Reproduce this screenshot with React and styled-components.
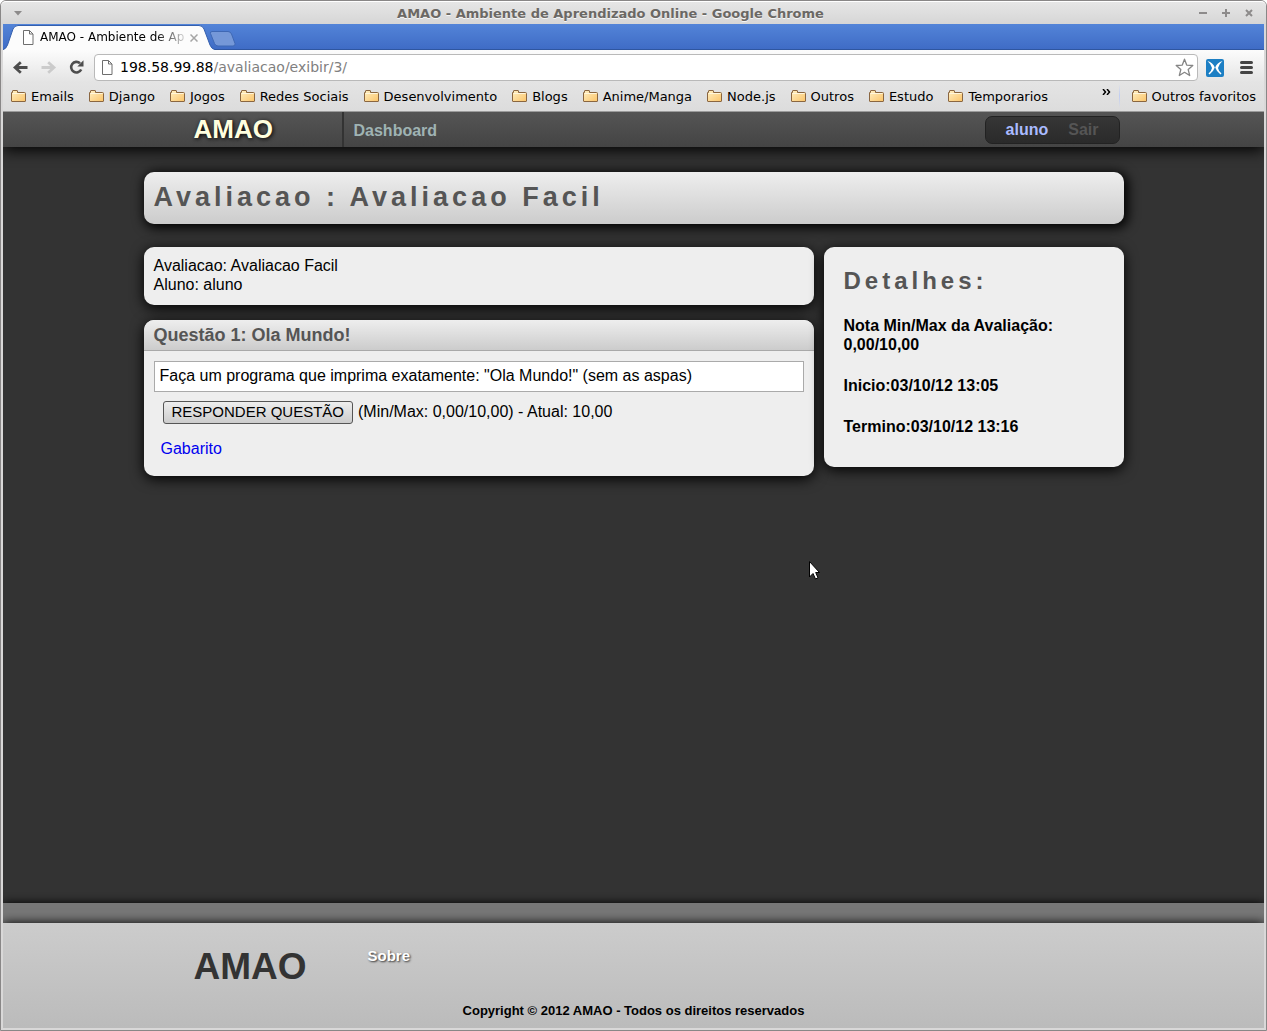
import React from "react";
import styled, { createGlobalStyle } from "styled-components";

const sans = `"Liberation Sans", Arial, sans-serif`;
const uiSans = `"DejaVu Sans", Verdana, sans-serif`;

const GlobalStyle = createGlobalStyle`
  *, *::before, *::after { box-sizing: border-box; }
  html { background: #fff; }
  body { margin: 0; font-family: ${sans}; font-size: 16px; line-height: 19px; color: #000; }
  h1, h2, h3, p { margin: 0; padding: 0; }
  svg { display: block; flex: none; }
`;

/* ---------- window ---------- */

const Window = styled.div`
  min-height: 100vh;
  display: flex;
  flex-direction: column;
  border: 1px solid #898787;
  border-radius: 6px 6px 0 0;
  background: #d9d8d8;
  padding: 0 2px 2px;
`;

const TitleBar = styled.header`
  height: 23px;
  display: flex;
  align-items: center;
  margin: 0 -2px;
  padding: 0 6px 0 4px;
  border-top: 1px solid #fff;
  border-radius: 5px 5px 0 0;
  background: linear-gradient(#e6e6e6, #d6d6d6);
  font-family: ${uiSans};
`;

const WindowTitle = styled.h1`
  flex: 1;
  text-align: center;
  font-size: 13px;
  line-height: 19px;
  color: #6b6864;
  text-shadow: 0 1px 0 #f6f6f6;
`;

const IconButton = styled.button`
  display: grid;
  place-items: center;
  width: ${(p) => p.$w}px;
  height: ${(p) => p.$h || 20}px;
  padding: 0;
  border: 0;
  background: none;
  color: ${(p) => p.$color || "#8d8b8b"};
  flex: none;
`;

const TabStrip = styled.div`
  height: 26px;
  display: flex;
  align-items: flex-end;
  border-bottom: 1px solid #2f56a0;
  background: linear-gradient(#5384d8, #3f6cc6);
`;

const Tab = styled.div`
  position: relative;
  width: 210px;
  height: 25px;
  margin-bottom: -1px;
  display: flex;
  align-items: center;
  padding: 0 12px 0 19px;
  font-family: ${uiSans};
  font-size: 12px;
`;

const TabShape = styled.svg`
  position: absolute;
  left: 0;
  top: 0;
`;

const TabLabel = styled.span`
  flex: 1;
  margin-left: 6px;
  white-space: nowrap;
  mask-image: linear-gradient(90deg, #000 115px, transparent 150px);
  position: relative;
`;

const TabIcon = styled.span`
  position: relative;
`;

const NewTab = styled.button`
  height: 25px;
  width: 27px;
  margin-left: -4px;
  padding: 4px 0 0;
  border: 0;
  background: none;
  position: relative;
`;

const BrowserBars = styled.div`
  border-bottom: 1px solid #9b9b9b;
  background: linear-gradient(#fcfcfc, #e4e4e4 32px, #dcdcdc);
  font-family: ${uiSans};
`;

const Toolbar = styled.div`
  display: flex;
  align-items: center;
  padding: 4px 7px 0 4px;
`;

const Omnibox = styled.div`
  flex: 1;
  height: 27px;
  margin: 0 8px 0 3px;
  padding: 0 3px 0 6px;
  display: flex;
  align-items: center;
  border: 1px solid #b9b9b9;
  border-radius: 4px;
  background: #fff;
  font-size: 14px;
`;

const Host = styled.label`
  margin-left: 7px;
`;

const UrlInput = styled.input`
  flex: 1;
  min-width: 0;
  padding: 0;
  border: 0;
  outline: 0;
  background: none;
  font: inherit;
  color: #808080;
`;

const ToolbarActions = styled.div`
  display: flex;
  align-items: center;
  gap: 12px;
`;

const Bookmarks = styled.nav`
  height: 30px;
  display: flex;
  align-items: center;
  padding: 0 8px;
  gap: 15px;
`;

const Bookmark = styled.a`
  display: flex;
  align-items: center;
  gap: 5px;
  color: #000;
  font-size: 13px;
  text-decoration: none;
  white-space: nowrap;
`;

const More = styled.button`
  margin-left: auto;
  padding: 0 0 9px;
  border: 0;
  background: none;
`;

const Divider = styled.span`
  width: 1px;
  height: 24px;
  margin: 0 -3px 0 -7px;
  background: linear-gradient(transparent, #c0cdf2, transparent);
`;

/* ---------- page ---------- */

const Page = styled.div`
  flex: 1;
  display: flex;
  flex-direction: column;
  background: #333;
  overflow: hidden;
`;

const Container = styled.div`
  width: 100%;
  max-width: 980px;
  margin: 0 auto;
`;

const NavBar = styled.nav`
  background: linear-gradient(#555, #444);
  box-shadow: 0 3px 15px #000;
`;

const NavRow = styled(Container)`
  height: 35px;
  display: flex;
  align-items: center;
`;

const NavBrand = styled.a`
  width: 200px;
  height: 35px;
  padding-left: 50px;
  border-right: 2px solid #333;
  color: #ffffdf;
  font-size: 26px;
  font-weight: bold;
  line-height: 34px;
  text-decoration: none;
  text-shadow: 1px 1px 4px #000;
`;

const NavLink = styled.a`
  padding: 2px 10px 0;
  color: ${(p) => p.$color};
  font-weight: bold;
  text-decoration: none;
`;

const UserBox = styled.div`
  height: 28px;
  margin: 0 4px 0 auto;
  padding: 2px 10px 4px;
  display: flex;
  align-items: center;
  border: 1px solid #222;
  border-radius: 7px;
  background: linear-gradient(#363636, #2a2a2a);
`;

const Main = styled.main`
  flex: 1;
  padding: 25px 0;
`;

const PageTitle = styled.h2`
  height: 52px;
  padding: 0 10px;
  border-radius: 10px;
  background: linear-gradient(#eee, #ccc);
  box-shadow: 2px 2px 12px 2px #000;
  color: #555;
  font-size: 27px;
  letter-spacing: 4px;
  line-height: 51px;
`;

const Columns = styled.div`
  margin-top: 23px;
  display: flex;
  align-items: flex-start;
  gap: 10px;
`;

const Column = styled.div`
  flex: 1;
  display: flex;
  flex-direction: column;
  gap: 15px;
`;

const Card = styled.section`
  border-radius: 10px;
  background: #eee;
  box-shadow: 0 3px 14px #000;
`;

const InfoCard = styled(Card)`
  padding: 9px 10px 11px;
`;

const QuestionTitle = styled.h3`
  padding: 6px 10px 5px;
  border-bottom: 1px solid #a9a9a9;
  border-radius: 10px 10px 0 0;
  background: linear-gradient(#eee, #ccc);
  color: #555;
  font-size: 18px;
  line-height: 19px;
`;

const QuestionBody = styled.div`
  padding: 10px 10px 18px;
`;

const Statement = styled.p`
  padding: 4px 5px 6px;
  border: 1px solid #aaa;
  background: #fff;
`;

const AnswerRow = styled.div`
  display: flex;
  align-items: center;
  gap: 5px;
  padding: 9px 9px 15px;
`;

const AnswerButton = styled.button`
  height: 23px;
  padding: 0 8px 2px;
  border: 1px solid #555;
  border-radius: 3px;
  background: linear-gradient(#eee, #ccc);
  color: #000;
  font-family: ${sans};
  font-size: 15px;
  line-height: 19px;
`;

const Score = styled.span`
  padding-bottom: 2px;
`;

const KeyLink = styled.a`
  padding-left: 7px;
  color: #00e;
  text-decoration: none;
`;

const Details = styled(Card)`
  width: 300px;
  padding: 20px 20px 31px;
  display: flex;
  flex-direction: column;
  gap: 22px;
  font-weight: bold;
`;

const DetailsTitle = styled.h3`
  color: #555;
  font-size: 24px;
  letter-spacing: 4px;
  line-height: 27px;
`;

const FooterBand = styled.div`
  height: 20px;
  background: #777;
  box-shadow: 0 0 10px #000;
`;

const Footer = styled.footer`
  background: linear-gradient(#ccc, #bbb);
  box-shadow: 0 0 10px #000;
`;

const FooterRow = styled(Container)`
  display: flex;
  align-items: flex-start;
  padding: 25px 0 16px 50px;
`;

const FooterBrand = styled.strong`
  width: 174px;
  color: #333;
  font-size: 37px;
  line-height: 38px;
`;

const FooterLink = styled.a`
  color: #fff;
  font-size: 15px;
  font-weight: bold;
  line-height: 16px;
  text-decoration: none;
  text-shadow: 1px 1px 2px #333;
`;

const Copyright = styled.p`
  padding-bottom: 9px;
  text-align: center;
  font-size: 13px;
  font-weight: bold;
  line-height: 17px;
`;

const Pointer = styled.svg`
  position: absolute;
  left: 808px;
  top: 560px;
`;

/* ---------- icons ---------- */

const FileIcon = () => (
  <svg width="12" height="15" viewBox="0 0 12 15" fill="#fff" stroke="#6e6e6e">
    <path d="M1.500.5h6l3.500 3.500v10.500h-9.500zM7.500.5v3.500h3.500" />
  </svg>
);

const FolderIcon = () => (
  <svg width="15" height="14" viewBox="0 0 15 14">
    <defs>
      <linearGradient id="folder" x1="0" y1="0" x2="1" y2="1">
        <stop offset="0" stopColor="#fff0c4" />
        <stop offset="1" stopColor="#fbc469" />
      </linearGradient>
    </defs>
    <path d="M.5 12V3.500h1V2Q1.500 1.500 2 1.500h4Q6.500 1.500 6.500 2v1.500h7q1 0 1 1V12q0 .5-.5 .5H1Q.5 12.500.5 12z" fill="url(#folder)" stroke="#8a6640" />
    <path d="M1.500 4.500h12" stroke="#fff6dc" />
  </svg>
);

const BackIcon = () => (
  <svg width="16" height="14" viewBox="0 0 16 14" fill="none" stroke="currentColor" strokeWidth="2.800">
    <path d="M7.800 1.200L2 6.500L7.800 11.800M2.500 6.500H14.500" />
  </svg>
);

const ForwardIcon = () => (
  <svg width="16" height="14" viewBox="0 0 16 14" fill="none" stroke="currentColor" strokeWidth="2.800">
    <path d="M7.200 1.200L13 6.500L7.200 11.800M12.500 6.500H.5" />
  </svg>
);

const ReloadIcon = () => (
  <svg width="16" height="15" viewBox="0 0 16 15">
    <path d="M12.200 9.500A5.300 5.300 0 1 1 11 3.200" fill="none" stroke="currentColor" strokeWidth="2.600" />
    <path d="M14.500 .3V6.500H8.300z" fill="currentColor" />
  </svg>
);

const StarIcon = () => (
  <svg width="19" height="19" viewBox="0 0 19 19" fill="#fff" stroke="#858585" strokeWidth="1.300" strokeLinejoin="round">
    <path d="M9.500 1.200l2.200 5.900 6.100.4-4.600 4.100 1.500 5.900-5.200-3.200-5.200 3.200 1.500-5.900-4.600-4.100 6.100-.4z" />
  </svg>
);

const ExtensionIcon = () => (
  <svg width="18" height="18" viewBox="0 0 18 18">
    <rect width="18" height="18" rx="2" fill="#1c7fc4" />
    <path d="M1.500 2Q7 3.500 8.800 8.500Q7.500 12.500 3.500 15.500L2.500 14.500Q5.500 12 6 9Q5 5 1.500 2zM16.500 2Q11 3.500 9.200 8.500Q10.500 12.500 14.500 15.500L15.500 14.500Q12.500 12 12 9Q13 5 16.500 2z" fill="#fff" />
  </svg>
);

const MenuIcon = () => (
  <svg width="13" height="13" viewBox="0 0 13 13" stroke="currentColor" strokeWidth="3" strokeLinecap="round">
    <path d="M1.500 1.500h10M1.500 6.500h10M1.500 11.500h10" />
  </svg>
);

const bookmarks = [
  "Emails", "Django", "Jogos", "Redes Sociais", "Desenvolvimento", "Blogs",
  "Anime/Manga", "Node.js", "Outros", "Estudo", "Temporarios",
];

const BookmarkItem = ({ name }) => (
  <Bookmark href="#"><FolderIcon />{name}</Bookmark>
);

const windowControls = [
  ["Minimizar", "M0 4h8", 2],
  ["Maximizar", "M0 4h8M4 0v8", 2],
  ["Fechar", "M1 1l6 6M7 1l-6 6", 2],
];

export default function App() {
  return (
    <>
      <GlobalStyle />
      <Window>
        <TitleBar>
          <IconButton $w={25} aria-label="Menu da janela">
            <svg width="8" height="5"><path d="M0 0h8L4 4.500z" fill="currentColor" /></svg>
          </IconButton>
          <WindowTitle>AMAO - Ambiente de Aprendizado Online - Google Chrome</WindowTitle>
          {windowControls.map(([label, d, w]) => (
            <IconButton key={label} $w={23} aria-label={label}>
              <svg width="8" height="8" fill="none" stroke="currentColor" strokeWidth={w}><path d={d} /></svg>
            </IconButton>
          ))}
        </TitleBar>

        <TabStrip>
          <Tab>
            <TabShape width="214" height="25" viewBox="0 0 214 25">
              <path d="M0 25Q3 24 4.500 20L10 4Q11.500 .5 15 .5H196Q199.500 .5 201 4L207 20Q208.500 24 212 25z" fill="#fcfcfc" />
              <path d="M0 24.500Q3 24 4.500 20L10 4Q11.500 .5 15 .5H196Q199.500 .5 201 4L207 20Q208.500 24 212 24.500" fill="none" stroke="#3560ae" />
            </TabShape>
            <TabIcon><FileIcon /></TabIcon>
            <TabLabel>AMAO - Ambiente de Ap</TabLabel>
            <IconButton $w={14} $color="#a5a5a5" aria-label="Fechar aba">
              <TabIcon>
                <svg width="8" height="8" stroke="currentColor" strokeWidth="1.500"><path d="M.5 .5l7 7M7.500 .5l-7 7" /></svg>
              </TabIcon>
            </IconButton>
          </Tab>
          <NewTab aria-label="Nova aba">
            <svg width="27" height="16" viewBox="0 0 27 16">
              <path d="M3 .5H19Q21.500 .5 22.500 3L26 12.500Q26.500 15 24 15H9Q6.500 15 5.500 12.500L1.500 2.500Q1 .5 3 .5z" fill="#7598d8" stroke="#3f68b4" />
            </svg>
          </NewTab>
        </TabStrip>

        <BrowserBars>
          <Toolbar>
            <IconButton $w={28} $h={27} $color="#4d4d4d" aria-label="Voltar"><BackIcon /></IconButton>
            <IconButton $w={28} $h={27} $color="#cbcbcb" aria-label="Avançar"><ForwardIcon /></IconButton>
            <IconButton $w={28} $h={27} $color="#4d4d4d" aria-label="Recarregar"><ReloadIcon /></IconButton>
            <Omnibox>
              <FileIcon />
              <Host htmlFor="url">198.58.99.88</Host>
              <UrlInput id="url" defaultValue="/avaliacao/exibir/3/" />
              <IconButton $w={19} aria-label="Favoritar"><StarIcon /></IconButton>
            </Omnibox>
            <ToolbarActions>
              <IconButton $w={18} aria-label="Extensão"><ExtensionIcon /></IconButton>
              <IconButton $w={21} $color="#454545" aria-label="Menu"><MenuIcon /></IconButton>
            </ToolbarActions>
          </Toolbar>
          <Bookmarks>
            {bookmarks.map((name) => <BookmarkItem key={name} name={name} />)}
            <More aria-label="Mais favoritos">
              <svg width="9" height="6" fill="none" stroke="#000" strokeWidth="1.500"><path d="M1 0l2.500 3L1 6M5 0l2.500 3L5 6" /></svg>
            </More>
            <Divider />
            <BookmarkItem name="Outros favoritos" />
          </Bookmarks>
        </BrowserBars>

        <Page>
          <NavBar>
            <NavRow>
              <NavBrand href="#">AMAO</NavBrand>
              <NavLink href="#" $color="#9fb3b3">Dashboard</NavLink>
              <UserBox>
                <NavLink href="#" $color="#aabbff">aluno</NavLink>
                <NavLink href="#" $color="#555">Sair</NavLink>
              </UserBox>
            </NavRow>
          </NavBar>

          <Main>
            <Container>
              <PageTitle>Avaliacao : Avaliacao Facil</PageTitle>
              <Columns>
                <Column>
                  <InfoCard>
                    <p>Avaliacao: Avaliacao Facil</p>
                    <p>Aluno: aluno</p>
                  </InfoCard>
                  <Card>
                    <QuestionTitle>Questão 1: Ola Mundo!</QuestionTitle>
                    <QuestionBody>
                      <Statement>Faça um programa que imprima exatamente: "Ola Mundo!" (sem as aspas)</Statement>
                      <AnswerRow>
                        <AnswerButton>RESPONDER QUESTÃO</AnswerButton>
                        <Score>(Min/Max: 0,00/10,00) - Atual: 10,00</Score>
                      </AnswerRow>
                      <KeyLink href="#">Gabarito</KeyLink>
                    </QuestionBody>
                  </Card>
                </Column>
                <Details as="aside">
                  <DetailsTitle>Detalhes:</DetailsTitle>
                  <p>Nota Min/Max da Avaliação: 0,00/10,00</p>
                  <p>Inicio:03/10/12 13:05</p>
                  <p>Termino:03/10/12 13:16</p>
                </Details>
              </Columns>
            </Container>
          </Main>

          <FooterBand />
          <Footer>
            <FooterRow>
              <FooterBrand>AMAO</FooterBrand>
              <FooterLink href="#">Sobre</FooterLink>
            </FooterRow>
            <Copyright>Copyright © 2012 AMAO - Todos os direitos reservados</Copyright>
          </Footer>
        </Page>
      </Window>
      <Pointer width="12" height="21" viewBox="0 0 12 21">
        <path d="M1.500 1.500V17L5 13.500L7.500 19L10 17.800L7.700 12.500H11.500z" fill="#fff" stroke="#000" />
      </Pointer>
    </>
  );
}
